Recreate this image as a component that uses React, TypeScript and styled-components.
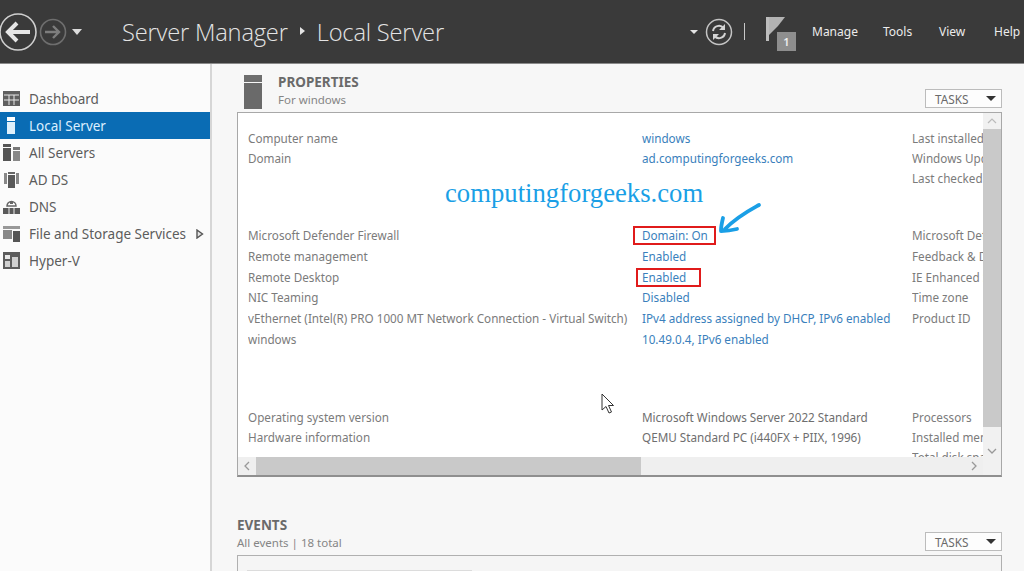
import React from 'react'
import styled, { createGlobalStyle } from 'styled-components'

const GlobalStyle = createGlobalStyle`
  html, body {
    margin: 0;
    padding: 0;
    height: 571px;
    overflow: hidden;
    background: #f7f7f7;
    font-family: "Noto Sans", "Open Sans", sans-serif;
  }
`

const Page = styled.div`
  width: 1024px;
  height: 571px;
  display: flex;
  flex-direction: column;
  overflow: hidden;
  position: relative;
`

const Header = styled.header`
  height: 63px;
  flex: none;
  display: flex;
  align-items: center;
  background: #3a3a3a;
  border-bottom: 1px solid #8a8a8a;
  color: #e6e6e6;
`

const NavButtons = styled.div`
  display: flex;
  align-items: center;
  width: 122px;
  flex: none;
`

const Crumbs = styled.div`
  display: flex;
  align-items: center;
  padding-top: 1px;
  font-family: "Open Sans", sans-serif;
  font-size: 23.7px;
  font-weight: 300;
  letter-spacing: -0.2px;
  color: #e4e4e4;
`

const CrumbArrow = styled.span`
  width: 0;
  height: 0;
  margin: 0 12px 2px 12px;
  border-left: 5px solid #e4e4e4;
  border-top: 4px solid transparent;
  border-bottom: 4px solid transparent;
`

const HeaderRight = styled.div`
  margin-left: auto;
  display: flex;
  align-items: center;
  height: 100%;
`

const Caret = styled.span`
  width: 0;
  height: 0;
  margin-right: 7px;
  border-top: 4px solid #e4e4e4;
  border-left: 4px solid transparent;
  border-right: 4px solid transparent;
`

const Divider = styled.span`
  width: 1px;
  height: 17px;
  background: #c8c8c8;
  margin: 0 21px 0 11px;
`

const FlagWrap = styled.div`
  position: relative;
  width: 30px;
  height: 35px;
  margin-right: 16px;
  top: 2px;
`

const FlagBadge = styled.span`
  position: absolute;
  left: 11px;
  bottom: 0;
  width: 19px;
  height: 19px;
  background: #8e8e8e;
  color: #efefef;
  font-size: 11px;
  font-weight: 600;
  text-align: center;
  line-height: 19px;
`

const Menu = styled.nav`
  display: flex;
  align-items: center;
  font-size: 12px;
  color: #ececec;
`

const MenuItem = styled.span<{ $w: number }>`
  width: ${({ $w }) => $w}px;
  flex: none;
  margin-top: -1px;
`

const Body = styled.div`
  flex: 1;
  display: flex;
  min-height: 0;
`

const Sidebar = styled.aside`
  width: 210px;
  flex: none;
  padding-top: 21px;
  background: #fbfbfb;
  border-right: 2px solid #d6d6d6;
`

const NavItem = styled.div<{ $active?: boolean }>`
  height: 27px;
  display: flex;
  align-items: center;
  padding-left: 3px;
  font-size: 13.5px;
  color: ${({ $active }) => ($active ? '#dcefff' : '#5c5c5c')};
  background: ${({ $active }) => ($active ? '#0a6cb4' : 'transparent')};
`

const NavIcon = styled.svg`
  width: 17px;
  height: 17px;
  margin-right: 9px;
  flex: none;
`

const NavExpand = styled.svg`
  width: 8px;
  height: 10px;
  margin-left: 10px;
  flex: none;
`

const Main = styled.main`
  flex: 1;
  min-width: 0;
  padding: 10px 22px 0 25px;
  background: #f7f7f7;
  position: relative;
`

const SectionHead = styled.div`
  display: flex;
  align-items: flex-end;
  height: 35px;
`

const SectionIcon = styled.svg`
  width: 18px;
  height: 34px;
  margin: 0 16px 0 7px;
  flex: none;
`

const Titles = styled.div`
  flex: 1;
  margin-bottom: 1px;
`

const Title = styled.div`
  font-size: 13.5px;
  font-weight: 700;
  line-height: 17px;
  color: #6a6a6a;
`

const Subtitle = styled.div`
  font-size: 11.5px;
  line-height: 17px;
  color: #858585;
`

const TasksButton = styled.div`
  width: 75px;
  height: 17px;
  box-sizing: content-box;
  display: flex;
  align-items: center;
  justify-content: space-between;
  padding: 0;
  border: 1px solid #bcbcbc;
  background: #fdfdfd;
  font-size: 11.8px;
  color: #6a6a6a;
  margin-bottom: 1px;
`

const TasksLabel = styled.span`
  margin-left: 9px;
`

const TasksCaret = styled.span`
  width: 0;
  height: 0;
  margin-right: 5px;
  border-top: 5px solid #333;
  border-left: 5px solid transparent;
  border-right: 5px solid transparent;
`

const Panel = styled.section`
  height: 362px;
  margin-top: 3px;
  border: 1px solid #a8a8a8;
  border-bottom: 2px solid #8f8f8f;
  background: #fff;
  display: grid;
  grid-template-columns: 1fr 18px;
  grid-template-rows: minmax(0, 1fr) 18px;
  overflow: hidden;
`

const Viewport = styled.div`
  overflow: hidden;
  min-height: 0;
  padding-left: 10px;
  padding-top: 15px;
`

const RowGroup = styled.div<{ $gap: number }>`
  margin-bottom: ${({ $gap }) => $gap}px;
`

const Row = styled.div<{ $h: number }>`
  display: grid;
  grid-template-columns: 394px 270px 80px;
  height: ${({ $h }) => $h}px;
  line-height: ${({ $h }) => $h}px;
  font-size: 11.7px;
  white-space: nowrap;
  color: #7b7b7b;
`

const Cell = styled.div`
  overflow: hidden;
`

const LinkCell = styled.div`
  color: #3a7fbc;
`

const PlainCell = styled.div`
  color: #6e6e6e;
`

const Marked = styled.span<{ $left: number; $right: number }>`
  position: relative;
  &::before {
    content: '';
    position: absolute;
    left: -${({ $left }) => $left}px;
    right: -${({ $right }) => $right}px;
    top: -1px;
    bottom: -2px;
    border: 2px solid #e01b1b;
  }
`

const VScroll = styled.div`
  background: #f1f1f1;
  display: flex;
  flex-direction: column;
  min-height: 0;
  grid-row: 1;
  grid-column: 2;
`

const VThumb = styled.div`
  height: 298px;
  flex: none;
  background: #c9c9c9;
`

const ScrollArrow = styled.svg`
  width: 18px;
  height: 18px;
  flex: none;
`

const VArrowTop = styled(ScrollArrow)`
  height: 16px;
`

const VArrowBottom = styled(ScrollArrow)`
  margin-top: 15px;
`

const HScroll = styled.div`
  grid-row: 2;
  grid-column: 1 / span 2;
  background: #efefef;
  display: flex;
  align-items: center;
`

const HThumb = styled.div`
  width: 385px;
  height: 100%;
  background: #c9c9c9;
`

const HSpacer = styled.div`
  flex: 1;
`

const HCorner = styled.div`
  width: 18px;
  height: 100%;
  flex: none;
  background: #f1f1f1;
`

const Events = styled.div`
  margin-top: 40px;
`

const EventsHead = styled.div`
  display: flex;
  align-items: flex-end;
  height: 35px;
`

const EventsBox = styled.div`
  height: 40px;
  margin-top: 3px;
  border: 1px solid #b0b0b0;
  background: #f5f5f5;
  padding: 14px 0 0 9px;
`

const EventsFilter = styled.div`
  width: 225px;
  height: 3px;
  background: #dcdcdc;
`

const Watermark = styled.div`
  position: absolute;
  left: 445px;
  top: 178px;
  font-family: "Liberation Serif", serif;
  font-size: 26.7px;
  line-height: 30px;
  color: #1a9fe6;
`

const Arrow = styled.svg`
  position: absolute;
  left: 716px;
  top: 198px;
  width: 48px;
  height: 42px;
`

const Pointer = styled.svg`
  position: absolute;
  left: 600px;
  top: 393px;
  width: 16px;
  height: 22px;
`

const navItems = [
  {
    label: 'Dashboard',
    icon: (
      <>
        <rect x="0" y="1" width="17" height="15" fill="#5f5f5f" />
        <path d="M1 5h15M6 5v10M11 5v10M1 10h15" stroke="#e8e8e8" strokeWidth="1" />
      </>
    ),
  },
  {
    label: 'Local Server',
    active: true,
    icon: (
      <>
        <rect x="4" y="0" width="8" height="4" fill="#ffffff" />
        <rect x="4" y="5" width="8" height="12" fill="#dff0fb" />
      </>
    ),
  },
  {
    label: 'All Servers',
    icon: (
      <>
        <rect x="0" y="0" width="8" height="3" fill="#555" />
        <rect x="0" y="4" width="8" height="13" fill="#555" />
        <rect x="10" y="3" width="7" height="3" fill="#777" />
        <rect x="10" y="7" width="7" height="10" fill="#888" />
      </>
    ),
  },
  {
    label: 'AD DS',
    icon: (
      <>
        <rect x="1" y="2" width="3" height="11" fill="#888" />
        <rect x="13" y="2" width="3" height="11" fill="#888" />
        <rect x="5" y="1" width="7" height="2" fill="#666" />
        <rect x="5" y="4" width="7" height="13" fill="#5a5a5a" />
      </>
    ),
  },
  {
    label: 'DNS',
    icon: (
      <>
        <path d="M4 8a4.500 4.500 0 0 1 9 0z" fill="none" stroke="#666" strokeWidth="1.5" />
        <rect x="7" y="3" width="3" height="3" fill="#666" />
        <rect x="0" y="10" width="17" height="6" fill="#5a5a5a" />
        <path d="M6 10v6M11 10v6" stroke="#eee" />
      </>
    ),
  },
  {
    label: 'File and Storage Services',
    expand: true,
    icon: (
      <>
        <rect x="0" y="1" width="17" height="3" fill="#999" />
        <rect x="0" y="5" width="9" height="9" fill="#888" />
        <rect x="10" y="6" width="7" height="11" fill="#555" />
      </>
    ),
  },
  {
    label: 'Hyper-V',
    icon: (
      <>
        <rect x="0" y="0" width="17" height="17" fill="#5c5c5c" />
        <rect x="2" y="3" width="5" height="4" fill="#e8e8e8" />
        <rect x="2" y="9" width="5" height="6" fill="#d0d0d0" />
        <rect x="9" y="5" width="6" height="10" fill="#d0d0d0" />
      </>
    ),
  },
]

const App = () => {
  return (
    <Page>
      <GlobalStyle />
      <Header>
        <NavButtons>
          <svg width="90" height="40" viewBox="0 0 90 40">
            <circle cx="18" cy="20" r="18" fill="none" stroke="#cfcfcf" strokeWidth="1.6" />
            <path d="M30 20H9M17 11l-9 9 9 9" fill="none" stroke="#e6e6e6" strokeWidth="4" />
            <circle cx="53" cy="20" r="12.500" fill="none" stroke="#6e6e6e" strokeWidth="1.6" />
            <path d="M45 20h14M53 14l6 6-6 6" fill="none" stroke="#7d7d7d" strokeWidth="2.4" />
            <path d="M72 17h10l-5 6z" fill="#dcdcdc" />
          </svg>
        </NavButtons>
        <Crumbs>
          Server Manager
          <CrumbArrow />
          Local Server
        </Crumbs>
        <HeaderRight>
          <Caret />
          <svg width="28" height="28" viewBox="0 0 28 28">
            <circle cx="14" cy="14" r="12.500" fill="none" stroke="#c4c4c4" strokeWidth="1.5" />
            <path d="M8 13a6 6 0 0 1 10.500-3M20 15a6 6 0 0 1-10.500 3" fill="none" stroke="#d4d4d4" strokeWidth="2" />
            <path d="M20 6v6h-6zM8 22v-6h6z" fill="#d4d4d4" />
          </svg>
          <Divider />
          <FlagWrap>
            <svg width="20" height="26" viewBox="0 0 20 26">
              <rect x="0" y="1" width="3" height="24" fill="#bdbdbd" />
              <path d="M3 1h16l-7 9-9 9z" fill="#b3b3b3" />
            </svg>
            <FlagBadge>1</FlagBadge>
          </FlagWrap>
          <Menu>
            <MenuItem $w={71}>Manage</MenuItem>
            <MenuItem $w={56}>Tools</MenuItem>
            <MenuItem $w={55}>View</MenuItem>
            <MenuItem $w={30}>Help</MenuItem>
          </Menu>
        </HeaderRight>
      </Header>
      <Body>
        <Sidebar>
          {navItems.map((item) => (
            <NavItem key={item.label} $active={item.active}>
              <NavIcon viewBox="0 0 17 17">{item.icon}</NavIcon>
              {item.label}
              {item.expand && (
                <NavExpand viewBox="0 0 8 10">
                  <path d="M1 1l5.500 4L1 9z" fill="#e4e4e4" stroke="#555" strokeWidth="1.4" />
                </NavExpand>
              )}
            </NavItem>
          ))}
        </Sidebar>
        <Main>
          <SectionHead>
            <SectionIcon viewBox="0 0 18 34">
              <rect width="18" height="7" fill="#6e6e6e" />
              <rect y="8" width="18" height="26" fill="#6a6a6a" />
            </SectionIcon>
            <Titles>
              <Title>PROPERTIES</Title>
              <Subtitle>For windows</Subtitle>
            </Titles>
            <TasksButton>
              <TasksLabel>TASKS</TasksLabel>
              <TasksCaret />
            </TasksButton>
          </SectionHead>
          <Panel>
            <Viewport>
              <RowGroup $gap={37}>
                <Row $h={20}>
                  <Cell>Computer name</Cell>
                  <LinkCell>windows</LinkCell>
                  <Cell>Last installed updates</Cell>
                </Row>
                <Row $h={20}>
                  <Cell>Domain</Cell>
                  <LinkCell>ad.computingforgeeks.com</LinkCell>
                  <Cell>Windows Update</Cell>
                </Row>
                <Row $h={20}>
                  <Cell />
                  <LinkCell />
                  <Cell>Last checked for updates</Cell>
                </Row>
              </RowGroup>
              <RowGroup $gap={57}>
                <Row $h={20.8}>
                  <Cell>Microsoft Defender Firewall</Cell>
                  <LinkCell>
                    <Marked $left={9} $right={8}>Domain: On</Marked>
                  </LinkCell>
                  <Cell>Microsoft Defender Antivirus</Cell>
                </Row>
                <Row $h={20.8}>
                  <Cell>Remote management</Cell>
                  <LinkCell>Enabled</LinkCell>
                  <Cell>Feedback &amp; Diagnostics</Cell>
                </Row>
                <Row $h={20.8}>
                  <Cell>Remote Desktop</Cell>
                  <LinkCell>
                    <Marked $left={6} $right={15}>Enabled</Marked>
                  </LinkCell>
                  <Cell>IE Enhanced Security Configuration</Cell>
                </Row>
                <Row $h={20.8}>
                  <Cell>NIC Teaming</Cell>
                  <LinkCell>Disabled</LinkCell>
                  <Cell>Time zone</Cell>
                </Row>
                <Row $h={20.8}>
                  <Cell>vEthernet (Intel(R) PRO 1000 MT Network Connection - Virtual Switch)</Cell>
                  <LinkCell>IPv4 address assigned by DHCP, IPv6 enabled</LinkCell>
                  <Cell>Product ID</Cell>
                </Row>
                <Row $h={20.8}>
                  <Cell>windows</Cell>
                  <LinkCell>10.49.0.4, IPv6 enabled</LinkCell>
                  <Cell />
                </Row>
              </RowGroup>
              <RowGroup $gap={0}>
                <Row $h={20}>
                  <Cell>Operating system version</Cell>
                  <PlainCell>Microsoft Windows Server 2022 Standard</PlainCell>
                  <Cell>Processors</Cell>
                </Row>
                <Row $h={20}>
                  <Cell>Hardware information</Cell>
                  <PlainCell>QEMU Standard PC (i440FX + PIIX, 1996)</PlainCell>
                  <Cell>Installed memory (RAM)</Cell>
                </Row>
                <Row $h={20}>
                  <Cell />
                  <Cell />
                  <Cell>Total disk space</Cell>
                </Row>
              </RowGroup>
            </Viewport>
            <VScroll>
              <VArrowTop viewBox="0 0 18 16">
                <path d="M5 10l4-4 4 4" fill="none" stroke="#bbb" strokeWidth="1.2" />
              </VArrowTop>
              <VThumb />
              <VArrowBottom viewBox="0 0 18 18">
                <path d="M5 7l4 4 4-4" fill="none" stroke="#999" strokeWidth="1.3" />
              </VArrowBottom>
            </VScroll>
            <HScroll>
              <ScrollArrow viewBox="0 0 18 18">
                <path d="M11 5l-4 4 4 4" fill="none" stroke="#999" strokeWidth="1.3" />
              </ScrollArrow>
              <HThumb />
              <HSpacer />
              <ScrollArrow viewBox="0 0 18 18">
                <path d="M7 5l4 4-4 4" fill="none" stroke="#999" strokeWidth="1.3" />
              </ScrollArrow>
              <HCorner />
            </HScroll>
          </Panel>
          <Events>
            <EventsHead>
              <Titles>
                <Title>EVENTS</Title>
                <Subtitle>All events | 18 total</Subtitle>
              </Titles>
              <TasksButton>
                <TasksLabel>TASKS</TasksLabel>
                <TasksCaret />
              </TasksButton>
            </EventsHead>
            <EventsBox>
              <EventsFilter />
            </EventsBox>
          </Events>
        </Main>
      </Body>
      <Watermark>computingforgeeks.com</Watermark>
      <Arrow viewBox="0 0 48 42">
        <path
          d="M43 7C34 12 22 18 9 31M7 20C6 24 5 29 5 33C11 33 17 32 21 31"
          fill="none"
          stroke="#1a9fe6"
          strokeWidth="3.8"
          strokeLinecap="round"
          strokeLinejoin="round"
        />
      </Arrow>
      <Pointer viewBox="0 0 16 22">
        <path
          d="M2 1v16l4-3.500 3 6.500 2.500-1-3-6.500h5z"
          fill="#fff"
          stroke="#333"
          strokeWidth="1"
          strokeLinejoin="round"
        />
      </Pointer>
    </Page>
  )
}

export default App
